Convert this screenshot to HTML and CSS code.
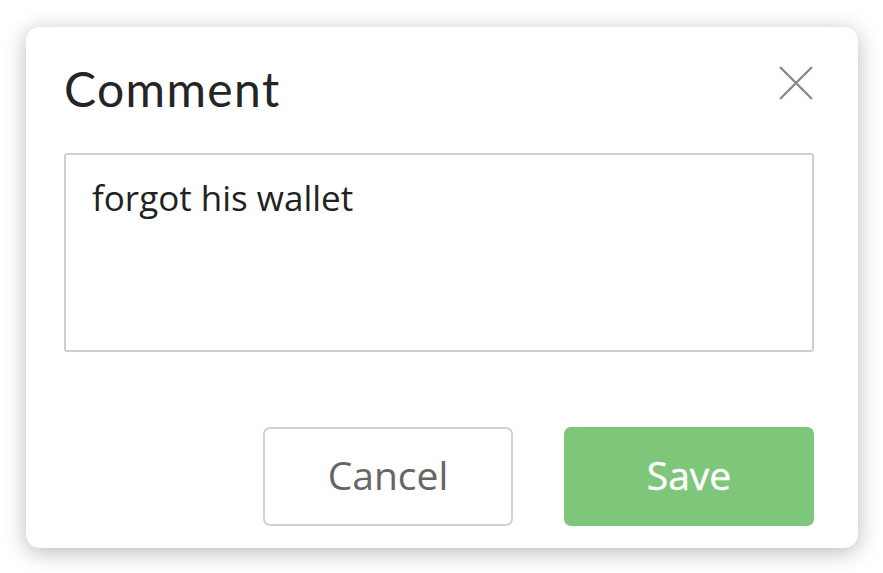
FILE: index.html
```html
<!DOCTYPE html>
<html>
<head>
<meta charset="utf-8">
<link rel="stylesheet" href="styles.css">
</head>
<body>
<div class="page">
  <div class="dialog">
    <div class="header">
      <h1 class="title">Comment</h1>
      <button class="close" aria-label="Close">
        <svg width="36" height="36" viewBox="0 0 36 36"><path d="M2 2 L34 34 M34 2 L2 34" stroke="#8a8a8a" stroke-width="2.4" fill="none"/></svg>
      </button>
    </div>
    <div class="textarea">forgot his wallet</div>
    <div class="actions">
      <button class="btn cancel">Cancel</button>
      <button class="btn save">Save</button>
    </div>
  </div>
</div>
</body>
</html>
```
FILE: styles.css
```css
html, body {
  margin: 0;
  padding: 0;
  background: #ffffff;
  width: 883px;
  height: 573px;
  overflow: hidden;
}
.page {
  padding: 27px 25px 25px 26px;
}
.dialog {
  width: 832px;
  height: 521px;
  box-sizing: border-box;
  background: #fff;
  border-radius: 14px;
  box-shadow: 0 4px 22px rgba(0,0,0,0.28);
  padding: 0 44px 22px 38px;
  display: flex;
  flex-direction: column;
}
.header {
  height: 126px;
  display: flex;
  justify-content: space-between;
  align-items: flex-start;
}
.title {
  margin: 36px 0 0 0;
  font-family: "Lato", "Open Sans", sans-serif;
  font-weight: 400;
  font-size: 48px;
  line-height: 52px;
  color: #252525;
  letter-spacing: 1.4px;
}
.close {
  margin-top: 38px;
  padding: 0;
  border: none;
  background: none;
  width: 36px;
  height: 36px;
  display: block;
}
.close svg { display: block; }
.textarea {
  height: 199px;
  box-sizing: border-box;
  border: 2px solid #cfcfcf;
  border-radius: 3px;
  padding: 21px 26px;
  font-family: "Open Sans", "Noto Sans", sans-serif;
  font-size: 35px;
  line-height: 44px;
  color: #222;
}
.actions {
  margin-top: 75px;
  display: flex;
  justify-content: flex-end;
  gap: 51px;
}
.btn {
  width: 250px;
  height: 99px;
  border-radius: 7px;
  padding: 0 0 4px 0;
  font-family: "Open Sans", "Noto Sans", sans-serif;
  font-size: 39px;
  cursor: pointer;
}
.cancel {
  background: #fff;
  border: 2px solid #d2d2d2;
  color: #666;
}
.save {
  background: #7dc67a;
  border: none;
  color: #fff;
  font-weight: 400;
  -webkit-text-stroke: 0.4px #fff;
}
```
